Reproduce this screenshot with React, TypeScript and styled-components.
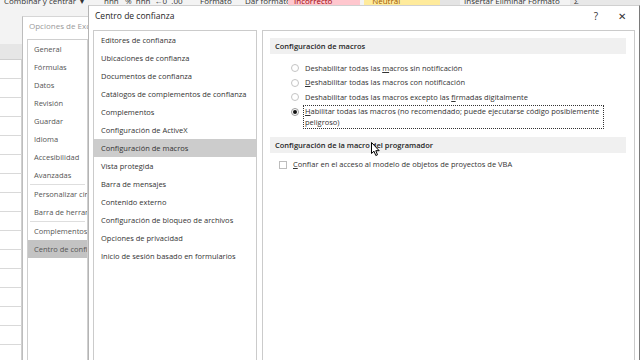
import React from 'react';
import styled, { createGlobalStyle } from 'styled-components';

const Global = createGlobalStyle`
  html, body { margin: 0; padding: 0; }
  body {
    width: 640px; height: 360px; overflow: hidden; background: #fff;
    font-family: "Open Sans", "Noto Sans", "Liberation Sans", sans-serif;
    -webkit-font-smoothing: antialiased;
  }
`;

const Screen = styled.div`
  position: relative;
  width: 640px;
  height: 360px;
  overflow: hidden;
  background: #fff;
  font-size: 7.5px;
  color: #333;
`;

/* ---------- Excel background ---------- */
const Excel = styled.div`
  display: flex;
  flex-direction: column;
  height: 100%;
`;

const RibbonStrip = styled.div`
  height: 8px;
  background: #f3f3f3;
  display: flex;
  overflow: hidden;
  flex-shrink: 0;
`;

const StripCell = styled.div<{ $w: number; $bg?: string; $fg?: string }>`
  width: ${p => p.$w}px;
  flex-shrink: 0;
  height: 12px;
  margin-top: -5px;
  line-height: 12px;
  padding-left: 4px;
  box-sizing: border-box;
  background: ${p => p.$bg || 'transparent'};
  color: ${p => p.$fg || '#333'};
  white-space: nowrap;
  overflow: hidden;
  font-size: 8px;
`;

const RibbonBody = styled.div`
  height: 36px;
  background: #f3f3f3;
  flex-shrink: 0;
`;

const ColHeader = styled.div`
  height: 16px;
  background: #e6e6e6;
  border-bottom: 1px solid #cfcfcf;
  box-sizing: border-box;
  flex-shrink: 0;
`;

const Grid = styled.div`
  flex: 1;
  display: flex;
  flex-direction: column;
`;

const GridRow = styled.div`
  height: 19px;
  flex-shrink: 0;
  border-bottom: 1px solid #d9d9d9;
  box-sizing: border-box;
  width: 22px;
  border-right: 1px solid #d0d0d0;
`;

/* ---------- Windows ---------- */
const Window = styled.div<{ $left: number; $top: number; $width: number }>`
  position: absolute;
  left: ${p => p.$left}px;
  top: ${p => p.$top}px;
  width: ${p => p.$width}px;
  bottom: -20px;
  background: #fff;
  box-sizing: border-box;
  display: flex;
  flex-direction: column;
`;

const BackWindow = styled(Window)`
  border-left: 1px solid #bdbdbd;
  border-top: 1px solid #d6d6d6;
`;

const FrontWindow = styled(Window)`
  border-left: 1px solid #b4b4b4;
  border-top: 1px solid #d0d0d0;
  border-right: 1px solid #7a7a7a;
`;

const BackTitle = styled.div`
  height: 22px;
  line-height: 17px;
  padding-left: 6px;
  color: #9a9a9a;
  font-size: 8px;
  white-space: nowrap;
  flex-shrink: 0;
`;

const BackBody = styled.div`
  flex: 1;
  display: flex;
  padding-left: 4px;
`;

const BackNav = styled.div`
  width: 61px;
  border: 1px solid #cfcfcf;
  border-bottom: none;
  box-sizing: border-box;
  display: flex;
  flex-direction: column;
  overflow: hidden;
`;

const BackItem = styled.div<{ $selected?: boolean }>`
  height: 18px;
  line-height: 18px;
  padding-left: 6px;
  white-space: nowrap;
  color: #555;
  flex-shrink: 0;
  background: ${p => (p.$selected ? '#c3c3c3' : 'transparent')};
`;

const Separator = styled.div`
  height: 1px;
  margin: 0 2px;
  background: #dedede;
  flex-shrink: 0;
`;

const TitleBar = styled.div`
  height: 24px;
  display: flex;
  align-items: center;
  flex-shrink: 0;
  padding-left: 6px;
  color: #1e1e1e;
  font-size: 8.5px;
`;

const TitleText = styled.div`
  flex: 1;
  margin-top: -5px;
`;

const TitleButton = styled.div<{ $w: number; $ml?: number; $mr?: number }>`
  width: ${p => p.$w}px;
  margin-left: ${p => p.$ml || 0}px;
  margin-right: ${p => p.$mr || 0}px;
  text-align: center;
  font-size: 10px;
  color: #333;
  margin-top: -5px;
`;

const DialogBody = styled.div`
  flex: 1;
  display: flex;
  gap: 5px;
  padding: 0 4px;
`;

const Nav = styled.div`
  width: 164px;
  flex-shrink: 0;
  border: 1px solid #cbcbcb;
  border-bottom: none;
  box-sizing: border-box;
  display: flex;
  flex-direction: column;
`;

const NavItem = styled.div<{ $selected?: boolean }>`
  height: 18px;
  line-height: 18px;
  padding-left: 7px;
  white-space: nowrap;
  color: #333;
  background: ${p => (p.$selected ? '#cccccc' : 'transparent')};
`;

const Content = styled.div`
  flex: 1;
  border: 1px solid #cbcbcb;
  border-bottom: none;
  box-sizing: border-box;
  padding: 7px 8px 0 7px;
  display: flex;
  flex-direction: column;
`;

const SectionHeader = styled.div<{ $mt?: number }>`
  height: 16px;
  line-height: 16px;
  background: #f0f0f0;
  padding-left: 5px;
  font-weight: 600;
  color: #262626;
  margin-top: ${p => p.$mt || 0}px;
  white-space: nowrap;
`;

const OptionList = styled.div`
  display: flex;
  flex-direction: column;
  padding-top: 7px;
`;

const Option = styled.div`
  display: flex;
  align-items: flex-start;
  padding: 0.75px 0 0.75px 21px;
`;

const Radio = styled.span<{ $checked?: boolean }>`
  width: 8px;
  height: 8px;
  margin-top: 2.5px;
  border-radius: 50%;
  border: 1px solid ${p => (p.$checked ? '#9a9a9a' : '#c4c4c4')};
  box-sizing: border-box;
  background: #fff;
  flex-shrink: 0;
  display: flex;
  align-items: center;
  justify-content: center;
  &::after {
    content: '';
    display: ${p => (p.$checked ? 'block' : 'none')};
    width: 4px;
    height: 4px;
    border-radius: 50%;
    background: #111;
  }
`;

const Label = styled.span<{ $focus?: boolean }>`
  margin-left: 4px;
  border: 1px ${p => (p.$focus ? 'dotted #333' : 'solid transparent')};
  padding: 0 1px;
  line-height: 11px;
  white-space: nowrap;
  color: #333;
  width: ${p => (p.$focus ? '297px' : 'auto')};
  u {
    text-decoration-thickness: 1px;
    text-underline-offset: 1px;
  }
`;

const CheckRow = styled.div`
  display: flex;
  align-items: flex-start;
  padding: 6px 0 0 9px;
`;

const CheckBox = styled.span`
  width: 8px;
  height: 8px;
  margin-top: 2px;
  border: 1px solid #bdbdbd;
  box-sizing: border-box;
  flex-shrink: 0;
`;

const CheckLabel = styled.span`
  margin-left: 6px;
  line-height: 11px;
  white-space: nowrap;
  color: #333;
  u {
    text-decoration-thickness: 1px;
    text-underline-offset: 1px;
  }
`;

const Cursor = styled.svg`
  position: absolute;
  left: 371px;
  top: 142px;
`;

const backItems = ['General', 'Fórmulas', 'Datos', 'Revisión', 'Guardar', 'Idioma', 'Accesibilidad', 'Avanzadas'];

const navItems = [
  'Editores de confianza',
  'Ubicaciones de confianza',
  'Documentos de confianza',
  'Catálogos de complementos de confianza',
  'Complementos',
  'Configuración de ActiveX',
  'Configuración de macros',
  'Vista protegida',
  'Barra de mensajes',
  'Contenido externo',
  'Configuración de bloqueo de archivos',
  'Opciones de privacidad',
  'Inicio de sesión basado en formularios',
];

export default function App() {
  return (
    <Screen>
      <Global />
      <Excel>
        <RibbonStrip>
          <StripCell $w={100}>Combinar y centrar&nbsp;&nbsp;▾</StripCell>
          <StripCell $w={96}>nnn&nbsp;&nbsp;&nbsp;%&nbsp;&nbsp;nnn&nbsp;&nbsp;←0&nbsp;&nbsp;.00</StripCell>
          <StripCell $w={45}>Formato</StripCell>
          <StripCell $w={47}>Dar formato</StripCell>
          <StripCell $w={72} $bg="#ffc7ce" $fg="#9c0006">&nbsp;Incorrecto</StripCell>
          <StripCell $w={3} />
          <StripCell $w={76} $bg="#ffeb9c" $fg="#9c5700">&nbsp;&nbsp;Neutral</StripCell>
          <StripCell $w={20} $bg="#e4e4e4" />
          <StripCell $w={110}>Insertar&nbsp;Eliminar&nbsp;Formato</StripCell>
          <StripCell $w={80} $bg="#e8e8e8">Σ</StripCell>
        </RibbonStrip>
        <RibbonBody />
        <ColHeader />
        <Grid>
          {Array.from({ length: 16 }).map((_, i) => (
            <GridRow key={i} />
          ))}
        </Grid>
      </Excel>

      <BackWindow $left={22} $top={16} $width={80}>
        <BackTitle>Opciones de Excel</BackTitle>
        <BackBody>
          <BackNav>
            {backItems.map(t => (
              <BackItem key={t}>{t}</BackItem>
            ))}
            <Separator />
            <BackItem>Personalizar cinta</BackItem>
            <BackItem>Barra de herramientas</BackItem>
            <Separator />
            <BackItem>Complementos</BackItem>
            <BackItem $selected>Centro de confianza</BackItem>
          </BackNav>
        </BackBody>
      </BackWindow>

      <FrontWindow $left={88} $top={5} $width={552}>
        <TitleBar>
          <TitleText>Centro de confianza</TitleText>
          <TitleButton $w={16}>?</TitleButton>
          <TitleButton $w={12} $ml={12} $mr={11}>✕</TitleButton>
        </TitleBar>
        <DialogBody>
          <Nav>
            {navItems.map((t, i) => (
              <NavItem key={t} $selected={i === 6}>{t}</NavItem>
            ))}
          </Nav>
          <Content>
            <SectionHeader>Configuración de macros</SectionHeader>
            <OptionList>
              <Option>
                <Radio />
                <Label>Deshabilitar todas las <u>m</u>acros sin notificación</Label>
              </Option>
              <Option>
                <Radio />
                <Label><u>D</u>eshabilitar todas las macros con notificación</Label>
              </Option>
              <Option>
                <Radio />
                <Label>Deshabilitar todas las macros excepto las <u>f</u>irmadas digitalmente</Label>
              </Option>
              <Option>
                <Radio $checked />
                <Label $focus>
                  <u>H</u>abilitar todas las macros (no recomendado; puede ejecutarse código posiblemente
                  <br />
                  peligroso)
                </Label>
              </Option>
            </OptionList>
            <SectionHeader $mt={7}>Configuración de la macro del programador</SectionHeader>
            <CheckRow>
              <CheckBox />
              <CheckLabel><u>C</u>onfiar en el acceso al modelo de objetos de proyectos de VBA</CheckLabel>
            </CheckRow>
          </Content>
        </DialogBody>
      </FrontWindow>

      <Cursor width="10" height="15" viewBox="0 0 10 15">
        <path d="M0.5 0.5 L0.5 11.5 L3 9.2 L4.8 13.5 L6.5 12.8 L4.8 8.7 L8.2 8.7 Z" fill="#fff" stroke="#000" strokeWidth="1" strokeLinejoin="round" />
      </Cursor>
    </Screen>
  );
}
